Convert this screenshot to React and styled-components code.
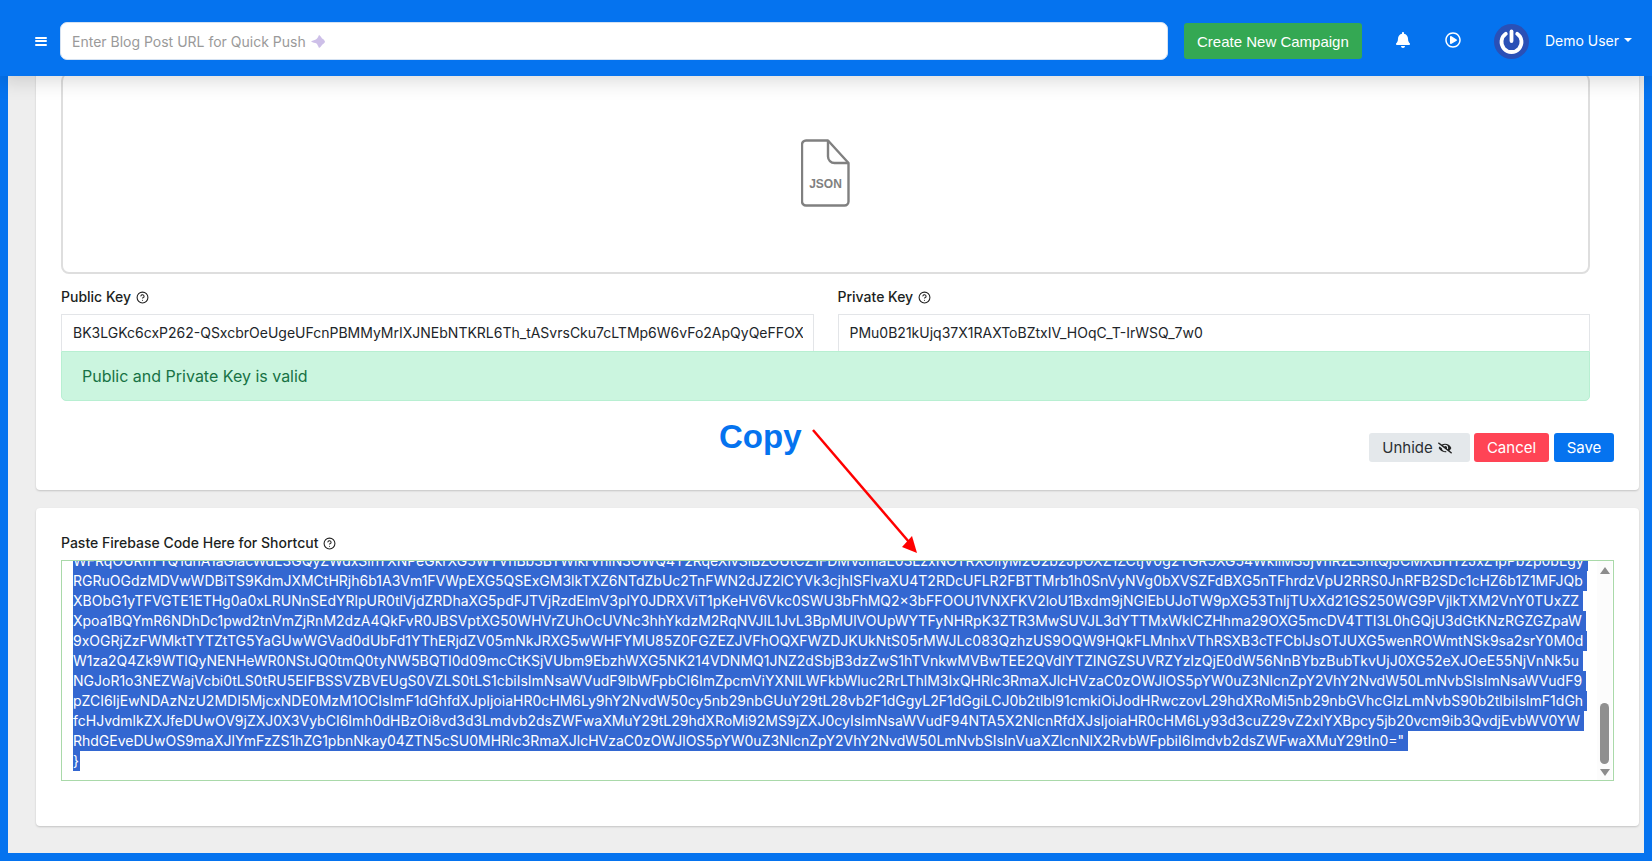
import React from 'react';
import styled, { createGlobalStyle } from 'styled-components';
import { FaBell, FaRegPlayCircle, FaEyeSlash } from 'react-icons/fa';
import { CircleHelp } from 'lucide-react';

const Global = createGlobalStyle`
  html, body { margin: 0; padding: 0; height: 100%; overflow: hidden; }
  body { font-family: Inter, "Liberation Sans", sans-serif; font-size: 14px; color: #212529; }
  * { box-sizing: border-box; }
`;

const Page = styled.div`
  position: relative;
  display: flex;
  flex-direction: column;
  height: 861px;
  background: #0573ef;
  overflow: hidden;
`;
const Header = styled.header`
  position: relative;
  z-index: 2;
  flex: none;
  display: flex;
  align-items: center;
  height: 76px;
  padding: 6px 20px 0 35px;
  background: #0573ef;
  box-shadow: 0 4px 20px rgba(0, 0, 0, 0.16);
`;
const Burger = styled.button`
  display: flex;
  flex-direction: column;
  justify-content: space-between;
  width: 12px;
  height: 9px;
  padding: 0;
  margin-right: 13px;
  border: 0;
  background: none;
  span { display: block; height: 2px; background: #fff; border-radius: 1px; }
`;
const SearchWrap = styled.div`
  position: relative;
  width: 1108px;
  margin-right: 16px;
`;
const SearchInput = styled.input`
  display: block;
  width: 100%;
  height: 38px;
  padding: 0 11px;
  border: 1px solid #d5e2f2;
  border-radius: 7px;
  background: #fff;
  font: 14px Inter, sans-serif;
  &::placeholder { color: #9a9a9a; opacity: 1; }
`;
const Sparkle = styled.svg`
  position: absolute;
  left: 251px;
  top: 13px;
`;
const CreateButton = styled.button`
  width: 178px;
  height: 36px;
  padding: 0;
  border: 0;
  border-radius: 3px;
  background: #34a853;
  color: #fff;
  font: 15px "Liberation Sans", sans-serif;
`;
const IconLink = styled.span`
  display: flex;
  align-items: center;
  color: #fff;
  margin-left: ${p => p.$gap}px;
  margin-bottom: 2px;
  font-size: ${p => p.$size}px;
`;
const Avatar = styled.svg`
  display: block;
  margin-left: 33px;
`;
const UserName = styled.span`
  display: flex;
  align-items: center;
  gap: 5px;
  margin-left: 16px;
  margin-bottom: 2px;
  color: #fff;
  font: 14px Inter, sans-serif;
  &::after {
    content: '';
    border-top: 4px solid #fff;
    border-left: 4px solid transparent;
    border-right: 4px solid transparent;
  }
`;
const Main = styled.main`
  flex: 1;
  min-height: 0;
  margin: 0 8px 8px;
  padding: 0 5px 0 28px;
  background: #eeeeee;
  overflow: hidden;
`;
const Card = styled.section`
  background: #fff;
  border-radius: 4px;
  box-shadow: 0 1px 2px rgba(0, 0, 0, 0.18);
  padding: 25px;
`;
const KeysCard = styled(Card)`
  margin-top: -28px;
  padding-bottom: 28px;
`;
const ShortcutCard = styled(Card)`
  margin-top: 18px;
  padding-bottom: 45px;
`;
const KeysArea = styled.div`
  padding-right: 24px;
`;
const DropBox = styled.div`
  display: flex;
  align-items: center;
  justify-content: center;
  height: 201px;
  border: 1px solid #dedede;
  border-width: 1px 2px 2px 2px;
  border-radius: 8px;
`;
const KeyGrid = styled.div`
  display: grid;
  grid-template-columns: 1fr 1fr;
  column-gap: 24px;
  margin-top: 13px;
`;
const Label = styled.label`
  display: flex;
  align-items: center;
  gap: 5px;
  height: 20px;
  margin-bottom: 7px;
  color: #1c1f22;
  font-size: 14px;
  font-weight: 500;
  line-height: 20px;
`;
const KeyInput = styled.input`
  display: block;
  width: 100%;
  height: 37px;
  padding: 0 10px 1px 11px;
  border: 1px solid #e3e5e8;
  border-bottom: 0;
  background: #fff;
  color: #212529;
  font: 14px Inter, sans-serif;
  outline: none;
`;
const Alert = styled.div`
  height: 50px;
  padding: 0 20px;
  display: flex;
  align-items: center;
  background: #cbf5df;
  border: 1px solid #b8efd2;
  border-radius: 0 0 5px 5px;
  color: #177245;
  font-size: 16px;
`;
const Actions = styled.div`
  display: flex;
  justify-content: flex-end;
  margin-top: 32px;
`;
const ActionButton = styled.button`
  display: flex;
  align-items: center;
  justify-content: center;
  gap: 5px;
  width: ${p => p.$w}px;
  height: 29px;
  margin-left: ${p => p.$ml}px;
  padding: 0 ${p => p.$pr || 0}px 0 0;
  border: 0;
  border-radius: 3px;
  background: ${p => p.$bg};
  color: ${p => p.$fg};
  font: 15px Inter, sans-serif;
`;
const CodeBox = styled.div`
  position: relative;
  height: 221px;
  border: 1px solid #a9d9a9;
  overflow: hidden;
`;
const CodeLines = styled.div`
  margin-top: -10px;
  padding-left: 11px;
  font-size: 14px;
  line-height: 20px;
  white-space: nowrap;
`;
const CodeLine = styled.div`
  width: fit-content;
  padding-right: ${p => (p.$last ? 1 : 4)}px;
  background: #3367d1;
  color: #fff;
`;
const Scrollbar = styled.div`
  position: absolute;
  top: 0;
  right: 1px;
  bottom: 0;
  width: 15px;
  background: #fcfcfc;
`;
const ArrowUp = styled.span`
  position: absolute;
  top: 6px;
  left: 2.5px;
  border-bottom: 7px solid #8c8c8c;
  border-left: 5px solid transparent;
  border-right: 5px solid transparent;
`;
const ArrowDown = styled.span`
  position: absolute;
  bottom: 4px;
  left: 2.5px;
  border-top: 7px solid #8c8c8c;
  border-left: 5px solid transparent;
  border-right: 5px solid transparent;
`;
const Thumb = styled.span`
  position: absolute;
  top: 142px;
  left: 3px;
  width: 9px;
  height: 61px;
  border-radius: 5px;
  background: #8f8f8f;
`;
const CopyNote = styled.div`
  position: absolute;
  z-index: 1;
  left: 719px;
  top: 418px;
  color: #0573ef;
  font: bold 33px/38px "Liberation Sans", sans-serif;
`;
const NoteArrow = styled.svg`
  position: absolute;
  z-index: 1;
  left: 800px;
  top: 420px;
`;

const lines = [
  'WFRqOURhTTQ1dnA1aGlacWdE3GQyZWdxSlhTXNPeGkrXG5WTVhBb3BTWlkrVhlN3OWQ4T2RqeXlvSlBZOUtCZ1FDMVJmaE03LzxNOTRXOllyM2U2b2JpOXZ1ZCtjV0g2TGR5XG54WkliM3JjVhRzL3htQjJCMXBHTzJxZ1pPb2p0bEgy',
  'RGRuOGdzMDVwWDBiTS9KdmJXMCtHRjh6b1A3Vm1FVWpEXG5QSExGM3lkTXZ6NTdZbUc2TnFWN2dJZ2lCYVk3cjhISFlvaXU4T2RDcUFLR2FBTTMrb1h0SnVyNVg0bXVSZFdBXG5nTFhrdzVpU2RRS0JnRFB2SDc1cHZ6b1Z1MFJQb',
  'XBObG1yTFVGTE1ETHg0a0xLRUNnSEdYRlpUR0tlVjdZRDhaXG5pdFJTVjRzdElmV3plY0JDRXViT1pKeHV6Vkc0SWU3bFhMQ2x3bFFOOU1VNXFKV2loU1Bxdm9jNGlEbUJoTW9pXG53TnljTUxXd21GS250WG9PVjlkTXM2VnY0TUxZZ',
  'Xpoa1BQYmR6NDhDc1pwd2tnVmZjRnM2dzA4QkFvR0JBSVptXG50WHVrZUhOcUVNc3hhYkdzM2RqNVJlL1JvL3BpMUlVOUpWYTFyNHRpK3ZTR3MwSUVJL3dYTTMxWklCZHhma29OXG5mcDV4TTI3L0hGQjU3dGtKNzRGZGZpaW',
  '9xOGRjZzFWMktTYTZtTG5YaGUwWGVad0dUbFd1YThERjdZV05mNkJRXG5wWHFYMU85Z0FGZEZJVFhOQXFWZDJKUkNtS05rMWJLc083QzhzUS9OQW9HQkFLMnhxVThRSXB3cTFCblJsOTJUXG5wenROWmtNSk9sa2srY0M0d',
  'W1za2Q4Zk9WTlQyNENHeWR0NStJQ0tmQ0tyNW5BQTI0d09mcCtKSjVUbm9EbzhWXG5NK214VDNMQ1JNZ2dSbjB3dzZwS1hTVnkwMVBwTEE2QVdlYTZINGZSUVRZYzIzQjE0dW56NnBYbzBubTkvUjJ0XG52eXJOeE55NjVnNk5u',
  'NGJoR1o3NEZWajVcbi0tLS0tRU5EIFBSSVZBVEUgS0VZLS0tLS1cbiIsImNsaWVudF9lbWFpbCI6ImZpcmViYXNlLWFkbWluc2RrLThlM3IxQHRlc3RmaXJlcHVzaC0zOWJlOS5pYW0uZ3NlcnZpY2VhY2NvdW50LmNvbSIsImNsaWVudF9',
  'pZCI6IjEwNDAzNzU2MDI5MjcxNDE0MzM1OCIsImF1dGhfdXJpIjoiaHR0cHM6Ly9hY2NvdW50cy5nb29nbGUuY29tL28vb2F1dGgyL2F1dGgiLCJ0b2tlbl91cmkiOiJodHRwczovL29hdXRoMi5nb29nbGVhcGlzLmNvbS90b2tlbiIsImF1dGh',
  'fcHJvdmlkZXJfeDUwOV9jZXJ0X3VybCI6Imh0dHBzOi8vd3d3Lmdvb2dsZWFwaXMuY29tL29hdXRoMi92MS9jZXJ0cyIsImNsaWVudF94NTA5X2NlcnRfdXJsIjoiaHR0cHM6Ly93d3cuZ29vZ2xlYXBpcy5jb20vcm9ib3QvdjEvbWV0YW',
  'RhdGEveDUwOS9maXJlYmFzZS1hZG1pbnNkay04ZTN5cSU0MHRlc3RmaXJlcHVzaC0zOWJlOS5pYW0uZ3NlcnZpY2VhY2NvdW50LmNvbSIsInVuaXZlcnNlX2RvbWFpbiI6Imdvb2dsZWFwaXMuY29tIn0="',
];

const JsonIcon = () => (
  <svg width="49" height="68" viewBox="0 0 49 68" fill="none" stroke="#808080" strokeWidth="2.4" strokeLinejoin="round">
    <path d="M5 1.500H27L47.500 24V62.500a4 4 0 0 1-4 4H5a4 4 0 0 1-4-4V5.500a4 4 0 0 1 4-4Z" />
    <path d="M27 1.500V17.500a6.500 6.500 0 0 0 6.500 6.500H47.500" />
    <text x="24.500" y="49" textAnchor="middle" fill="#808080" stroke="none" fontFamily="Liberation Sans" fontWeight="700" fontSize="12">JSON</text>
  </svg>
);

const Help = () => <CircleHelp size={13} color="#222" strokeWidth={2} />;

export default function App() {
  return (
    <Page>
      <Global />
      <Header>
        <Burger aria-label="Menu"><span /><span /><span /></Burger>
        <SearchWrap>
          <SearchInput placeholder="Enter Blog Post URL for Quick Push" />
          <Sparkle width="14" height="13" viewBox="0 0 14 13">
            <path d="M8 0C9 .5 10.500 2 11 3.500 12.500 4 14 5.500 14 7 13 8.500 12 9 11 10 10 11.500 9 12.500 8 13 7 11 6.500 9.500 5.500 8.500 4 8 2 7.500 0 6.500 2 5.500 4 5 5.500 4 6.500 3 7.500 1.500 8 0Z" fill="#cdbfe8" />
          </Sparkle>
        </SearchWrap>
        <CreateButton>Create New Campaign</CreateButton>
        <IconLink $gap={33} $size={16}><FaBell /></IconLink>
        <IconLink $gap={34} $size={16}><FaRegPlayCircle /></IconLink>
        <Avatar width="35" height="35" viewBox="0 0 35 35">
          <circle cx="17.500" cy="17.500" r="17.500" fill="#2a50b6" />
          <path d="M11.800 9.800a10 10 0 1 0 11.400 0" fill="none" stroke="#fff" strokeWidth="3.800" strokeLinecap="round" />
          <path d="M17.500 7.500V17" stroke="#fff" strokeWidth="3.800" strokeLinecap="round" />
        </Avatar>
        <UserName>Demo User</UserName>
      </Header>
      <Main>
        <KeysCard>
          <KeysArea>
            <DropBox><JsonIcon /></DropBox>
            <KeyGrid>
              <div>
                <Label>Public Key <Help /></Label>
                <KeyInput readOnly value="BK3LGKc6cxP262-QSxcbrOeUgeUFcnPBMMyMrIXJNEbNTKRL6Th_tASvrsCku7cLTMp6W6vFo2ApQyQeFFOX" />
              </div>
              <div>
                <Label>Private Key <Help /></Label>
                <KeyInput readOnly value="PMu0B21kUjq37X1RAXToBZtxIV_HOqC_T-IrWSQ_7w0" />
              </div>
            </KeyGrid>
            <Alert>Public and Private Key is valid</Alert>
          </KeysArea>
          <Actions>
            <ActionButton $w={101} $ml={0} $pr={5} $bg="#e4e8eb" $fg="#2b2f33">Unhide <FaEyeSlash size={14} color="#222" /></ActionButton>
            <ActionButton $w={75} $ml={4} $bg="#ff4455" $fg="#fff">Cancel</ActionButton>
            <ActionButton $w={60} $ml={5} $bg="#0573ef" $fg="#fff">Save</ActionButton>
          </Actions>
        </KeysCard>
        <ShortcutCard>
          <Label>Paste Firebase Code Here for Shortcut <Help /></Label>
          <CodeBox>
            <CodeLines>
              {lines.map(l => <CodeLine key={l}>{l}</CodeLine>)}
              <CodeLine $last>{'}'}</CodeLine>
            </CodeLines>
            <Scrollbar>
              <ArrowUp />
              <Thumb />
              <ArrowDown />
            </Scrollbar>
          </CodeBox>
        </ShortcutCard>
      </Main>
      <CopyNote>Copy</CopyNote>
      <NoteArrow width="130" height="140" viewBox="0 0 130 140">
        <path d="M13 10L109 122" stroke="#f00" strokeWidth="2.500" />
        <path d="M117 133L112 116L102 127Z" fill="#f00" />
      </NoteArrow>
    </Page>
  );
}
